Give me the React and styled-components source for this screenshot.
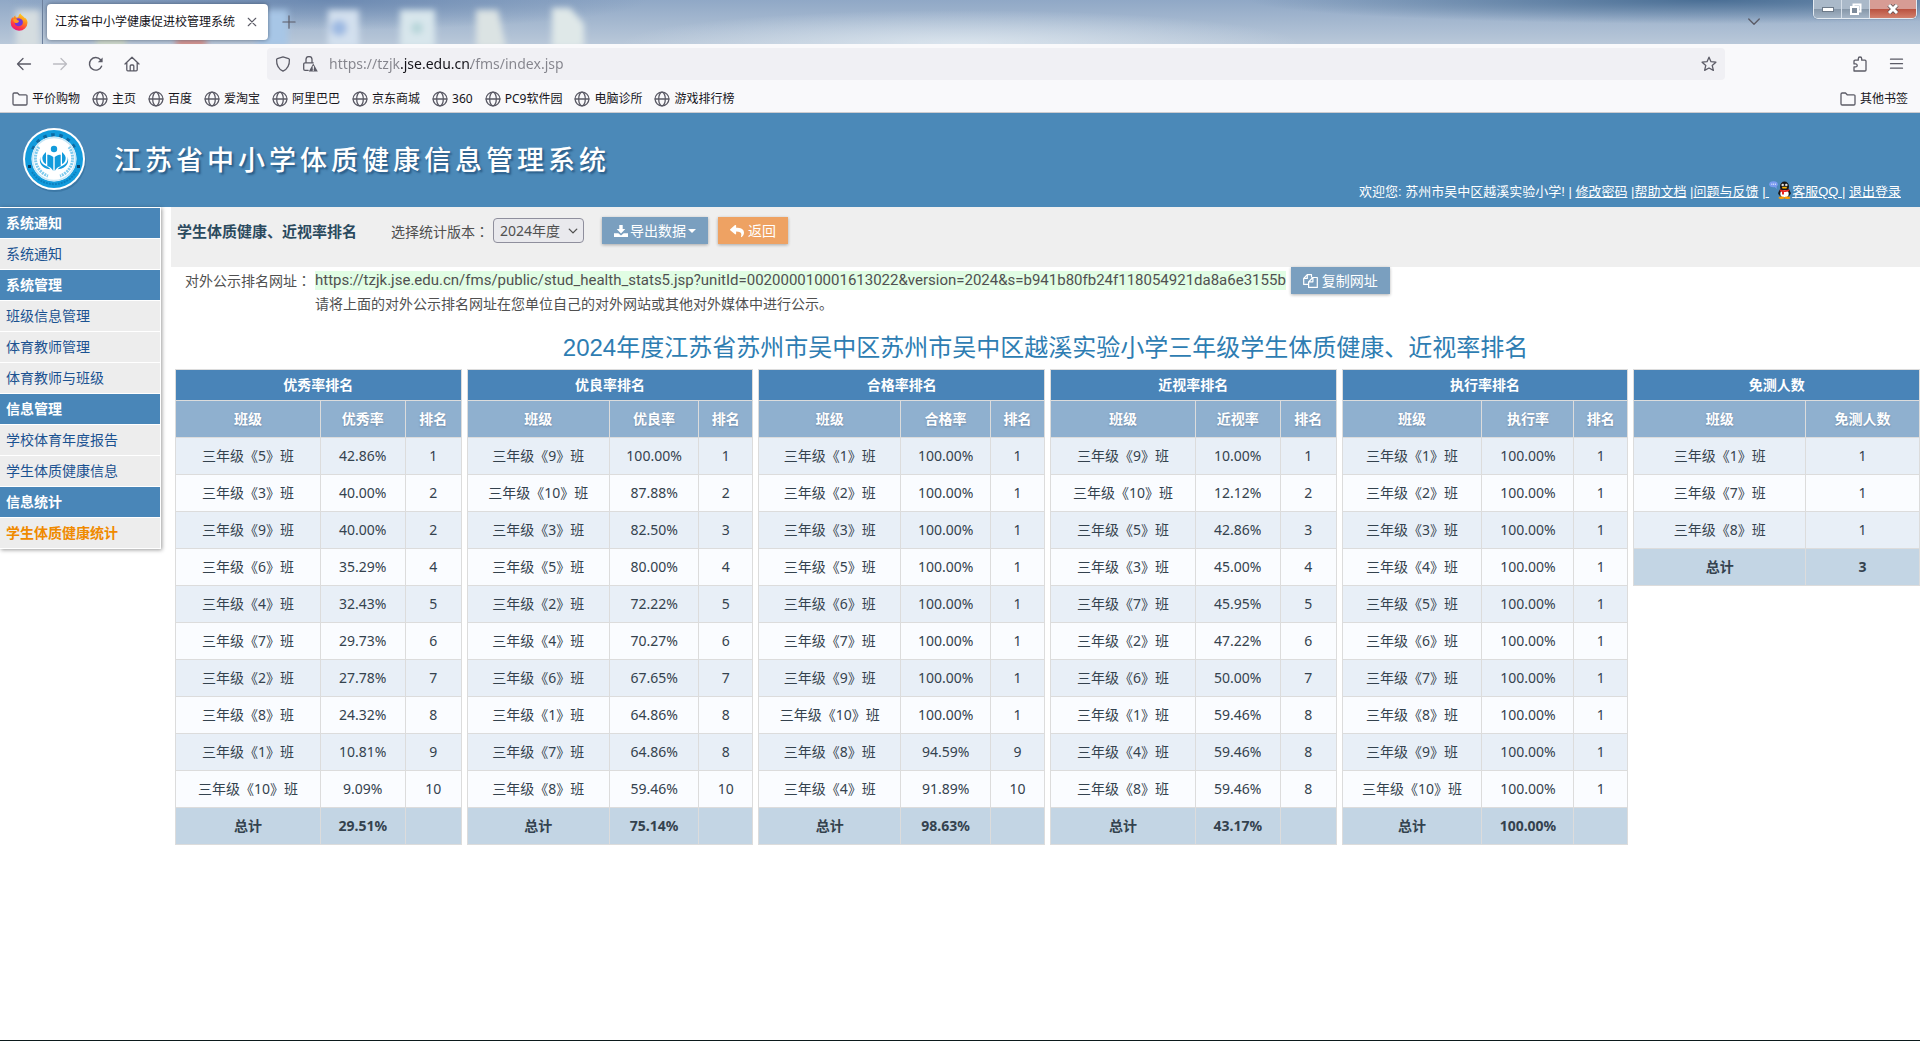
import React, { useState } from "react";
import styled, { createGlobalStyle, css } from "styled-components";
import { FaReply } from "react-icons/fa";

const BOOKMARKS = [
  { name: "平价购物", folder: true },
  { name: "主页" },
  { name: "百度" },
  { name: "爱淘宝" },
  { name: "阿里巴巴" },
  { name: "京东商城" },
  { name: "360" },
  { name: "PC9软件园" },
  { name: "电脑诊所" },
  { name: "游戏排行榜" },
];

const MENU = [
  { title: "系统通知", items: ["系统通知"] },
  { title: "系统管理", items: ["班级信息管理", "体育教师管理", "体育教师与班级"] },
  { title: "信息管理", items: ["学校体育年度报告", "学生体质健康信息"] },
  { title: "信息统计", items: ["学生体质健康统计"] },
];

const ACTIVE_ITEM = "学生体质健康统计";

const PUBLIC_URL =
  "https://tzjk.jse.edu.cn/fms/public/stud_health_stats5.jsp?unitId=002000010001613022&version=2024&s=b941b80fb24f118054921da8a6e3155b";

// rows: [class number, value, rank]
const RANKINGS = [
  {
    title: "优秀率排名",
    columns: ["班级", "优秀率", "排名"],
    widths: [145, 85, 56],
    rows: [
      [5, "42.86%", 1],
      [3, "40.00%", 2],
      [9, "40.00%", 2],
      [6, "35.29%", 4],
      [4, "32.43%", 5],
      [7, "29.73%", 6],
      [2, "27.78%", 7],
      [8, "24.32%", 8],
      [1, "10.81%", 9],
      [10, "9.09%", 10],
    ],
    total: ["29.51%", ""],
  },
  {
    title: "优良率排名",
    columns: ["班级", "优良率", "排名"],
    widths: [142, 89, 54],
    rows: [
      [9, "100.00%", 1],
      [10, "87.88%", 2],
      [3, "82.50%", 3],
      [5, "80.00%", 4],
      [2, "72.22%", 5],
      [4, "70.27%", 6],
      [6, "67.65%", 7],
      [1, "64.86%", 8],
      [7, "64.86%", 8],
      [8, "59.46%", 10],
    ],
    total: ["75.14%", ""],
  },
  {
    title: "合格率排名",
    columns: ["班级", "合格率", "排名"],
    widths: [142, 90, 54],
    rows: [
      [1, "100.00%", 1],
      [2, "100.00%", 1],
      [3, "100.00%", 1],
      [5, "100.00%", 1],
      [6, "100.00%", 1],
      [7, "100.00%", 1],
      [9, "100.00%", 1],
      [10, "100.00%", 1],
      [8, "94.59%", 9],
      [4, "91.89%", 10],
    ],
    total: ["98.63%", ""],
  },
  {
    title: "近视率排名",
    columns: ["班级", "近视率", "排名"],
    widths: [145, 85, 56],
    rows: [
      [9, "10.00%", 1],
      [10, "12.12%", 2],
      [5, "42.86%", 3],
      [3, "45.00%", 4],
      [7, "45.95%", 5],
      [2, "47.22%", 6],
      [6, "50.00%", 7],
      [1, "59.46%", 8],
      [4, "59.46%", 8],
      [8, "59.46%", 8],
    ],
    total: ["43.17%", ""],
  },
  {
    title: "执行率排名",
    columns: ["班级", "执行率", "排名"],
    widths: [140, 92, 54],
    rows: [1, 2, 3, 4, 5, 6, 7, 8, 9, 10].map((n) => [n, "100.00%", 1]),
    total: ["100.00%", ""],
  },
  {
    title: "免测人数",
    columns: ["班级", "免测人数"],
    widths: [172, 114],
    rows: [
      [1, "1"],
      [7, "1"],
      [8, "1"],
    ],
    total: ["3"],
  },
];

const Line = ({ size = 16, width = 1.3, children, ...rest }) => (
  <svg
    width={size}
    height={size}
    viewBox="0 0 16 16"
    fill="none"
    stroke="currentColor"
    strokeWidth={width}
    strokeLinecap="round"
    strokeLinejoin="round"
    aria-hidden="true"
    {...rest}
  >
    {children}
  </svg>
);

const BackIcon = () => (
  <Line>
    <path d="M1.5 8h13M7 2.5 1.5 8 7 13.5" />
  </Line>
);

const ForwardIcon = () => (
  <Line>
    <path d="M14.5 8h-13M9 2.5 14.5 8 9 13.5" />
  </Line>
);

const ReloadIcon = () => (
  <Line width={1.4}>
    <path d="M13.6 10.2A6.3 6.3 0 1 1 12.6 3.8" />
    <path d="M14.6 1.5v4.8H9.8z" fill="currentColor" stroke="none" />
  </Line>
);

const HomeIcon = () => (
  <Line>
    <path d="M1 8 8 1.2 15 8M2.8 6.6v7.2a1 1 0 0 0 1 1h8.4a1 1 0 0 0 1-1V6.6M6.2 14.6V10a1 1 0 0 1 1-1h1.6a1 1 0 0 1 1 1v4.6" />
  </Line>
);

const ShieldIcon = () => (
  <Line>
    <path d="M8 .9 13.6 2.6c.5.2.8.5.8 1 .2 5-1.6 9.3-6.4 11.6C3.2 12.9 1.4 8.6 1.6 3.6c0-.5.3-.8.8-1z" />
  </Line>
);

const LockIcon = () => (
  <Line>
    <path d="M4 6.800V3.600a3 3 0 0 1 6 0v3.200M6.200 14.300H3a1.300 1.300 0 0 1-1.300-1.300V8.100A1.300 1.300 0 0 1 3 6.800h8.200" />
    <path d="M11.300 7.500 15.800 15.600H6.800z" fill="currentColor" stroke="none" />
    <path d="M11.300 10.300v2.300M11.300 14v.2" stroke="#f0f0f4" width="1" />
  </Line>
);

const StarIcon = () => (
  <Line>
    <path d="m8 1.200 2 4.500 4.900.5-3.700 3.200 1.200 4.900L8 12l-4.400 2.300 1.200-4.900L1.100 6.200 6 5.700z" />
  </Line>
);

const PuzzleIcon = () => (
  <Line>
    <path d="M2 15V10.900h1.700a1.500 1.500 0 0 0 0-3H2V5.200A1 1 0 0 1 3 4.200h3.300V2.700a1.700 1.700 0 0 1 3.400 0v1.500H13a1 1 0 0 1 1 1V14a1 1 0 0 1-1 1z" />
  </Line>
);

const MenuIcon = () => (
  <Line>
    <path d="M2.500 3.200h12M2.500 7.700h12M2.500 12.200h12" />
  </Line>
);

const FolderIcon = () => (
  <Line>
    <path d="M1 12.800V3.200A1.200 1.200 0 0 1 2.200 2h3.300l1.700 1.800h6.600A1.200 1.200 0 0 1 15 5v7.800a1.200 1.200 0 0 1-1.200 1.200H2.200A1.200 1.200 0 0 1 1 12.800z" />
  </Line>
);

const GlobeIcon = () => (
  <Line>
    <circle cx="8" cy="8" r="6.900" />
    <ellipse cx="8" cy="8" rx="3.300" ry="6.900" />
    <path d="M1.100 8h13.800" />
  </Line>
);

const FirefoxIcon = () => (
  <svg width="18" height="18" viewBox="0 0 18 18" aria-hidden="true">
    <defs>
      <linearGradient id="fox" x1="0.8" y1="0" x2="0.3" y2="1">
        <stop offset="0" stopColor="#ffe226" />
        <stop offset="0.4" stopColor="#ff8a1c" />
        <stop offset="0.75" stopColor="#ff3647" />
        <stop offset="1" stopColor="#e31587" />
      </linearGradient>
    </defs>
    <path
      d="M10.500.5c.5 2 3 2.700 4.500 4.700.3.400.4.100.4-.4 1.700 2 2.100 3.600 2.100 5A8.400 8 0 0 1 9 17.700 8.300 8 0 0 1 .7 9.500c0-2.300.8-4 2-5.400 0 .6.100 1 .4 1.300.4-1.300 1.200-2.400 2.300-3-.1 1 .2 1.600.8 2 1.400-.1 2-.3 2.300-1 .2-1.100.8-2.200 2-2.900z"
      fill="url(#fox)"
    />
    <path
      d="M6.200 5.700c2-1.100 5.700-.4 6.500 2.400.8 3-1.300 5.200-3.900 5.200-2.300 0-4.200-1.700-4.200-3.800 1 .7 2.200.6 3.100.1.900-.6 1.400-.8 1.300-1.300C8.700 7.600 7 8 6.200 5.700z"
      fill="#6f36d9"
    />
    <path d="M3 6.500c1.700-1.300 3.200-.8 4 .3.500.8 2 .6 2 1.300 0 .8-1.300 1.800-2.500 2-1.500.2-3-1.200-3.500-3.600z" fill="#ff9a1f" />
  </svg>
);

const DownloadIcon = () => (
  <svg width="14" height="14" viewBox="0 0 14 14" fill="currentColor" aria-hidden="true">
    <path d="M5.300 1h3.400v4h2.600L7 9.600 2.700 5h2.600z" />
    <path d="M0 9.200h4.300L7 11.600l2.700-2.400H14V13H0z" />
  </svg>
);

const CopyIcon = () => (
  <svg width="15" height="14" viewBox="0 0 15 14" fill="none" stroke="currentColor" strokeWidth="1.200" strokeLinejoin="round" aria-hidden="true">
    <path d="M5.300 10.400H.7V4.300L4.200.7h4.300v2.700M4.300.9v3.500H.8" />
    <path d="M9.800 3.500h4.500v9.900H5.600V7.800zM9.900 3.700v4.100H5.800" />
  </svg>
);

const QqIcon = () => (
  <svg width="23" height="18" viewBox="0 0 23 18" aria-hidden="true">
    <ellipse cx="4.500" cy="3.200" rx="4.300" ry="3" fill="#7b9bf0" />
    <path d="M5 5.500 8 8 7.200 4.800z" fill="#7b9bf0" />
    <path d="M2.300 3.200h1M4.100 3.200h1M5.900 3.200h1" stroke="#fff" />
    <ellipse cx="15.500" cy="12" rx="5.800" ry="5" fill="#191919" />
    <path d="M9.200 13.500c0-3 1.500-4.500 2.500-5.500h7.600c1 1 2.500 2.500 2.500 5.500l-1.400-.5H10.600z" fill="#191919" />
    <ellipse cx="15.500" cy="5.500" rx="4.500" ry="5" fill="#191919" />
    <ellipse cx="15.500" cy="12.700" rx="4.200" ry="3.800" fill="#fff" />
    <circle cx="13.800" cy="4" r="1.300" fill="#fff" />
    <circle cx="17.200" cy="4" r="1.300" fill="#fff" />
    <circle cx="14.100" cy="4.100" r=".5" fill="#000" />
    <circle cx="16.900" cy="4.100" r=".5" fill="#000" />
    <ellipse cx="15.500" cy="6.700" rx="2.600" ry=".9" fill="#ffb400" />
    <path d="M10.800 8.200c3 1.500 6.400 1.500 9.400 0v1.900c-1.700.8-3.900 1.100-5.200 1v2.500h-2v-2.800c-1-.1-2.200-.6-2.200-.6z" fill="#e8231e" />
    <ellipse cx="12.600" cy="16.700" rx="3" ry="1.200" fill="#ff9d00" />
    <ellipse cx="18.400" cy="16.700" rx="3" ry="1.200" fill="#ff9d00" />
  </svg>
);

const SchoolBadge = () => (
  <svg width="66" height="66" viewBox="0 0 66 66" aria-hidden="true">
    <circle cx="33" cy="34" r="31" fill="#2d6794" opacity=".5" />
    <circle cx="32" cy="32" r="31" fill="#fff" />
    <circle cx="32" cy="32" r="29" fill="#129bdc" />
    <path d="M11 22.500A23.500 26 0 0 1 53 22.500" fill="none" stroke="#0b5d94" strokeWidth="4" strokeDasharray="3.500 4.500" opacity=".8" />
    <path d="M10 45A26 26 0 0 0 54 45" fill="none" stroke="#0a79b8" strokeWidth="2" strokeDasharray="2 1" opacity=".8" />
    <circle cx="32" cy="32" r="22.500" fill="#fff" />
    <circle cx="32" cy="32" r="21.500" fill="none" stroke="#c4e6f6" strokeWidth="1.500" />
    <path d="M17 20A19 19 0 0 0 26 49M47 20A19 19 0 0 1 38 49" fill="none" stroke="#7fcbee" strokeWidth="3" strokeDasharray="2 .8" />
    <circle cx="32" cy="22" r="3.200" fill="#129bdc" />
    <path d="M31.300 44V30c-2-1.700-4-2.300-6-2.300v11.500c2.500.5 4.500 2 6 4.800zM32.700 44V30c2-1.700 4-2.300 6-2.300v11.500c-2.500.5-4.500 2-6 4.800z" fill="#129bdc" />
    <path d="M24 25c-3 2.500-4.200 5-3.500 7.500.5 2.500 2 4 3.500 4.500zM40 25c3 2.500 4.200 5 3.500 7.500-.5 2.500-2 4-3.500 4.500z" fill="#129bdc" />
    <path d="M18.500 29.500c-.8 3.500.4 6 3 8 2 1.600 5 2.300 7 4.700-5.500 0-13-4-10-12.700zM45.500 29.500c.8 3.500-.4 6-3 8-2 1.600-5 2.300-7 4.700 5.500 0 13-4 10-12.700z" fill="#129bdc" />
    <rect x="6" y="38" width="3" height="3" fill="#0b3f66" />
    <rect x="55" y="38" width="3" height="3" fill="#0b3f66" />
  </svg>
);

// desktop icons showing through the translucent title bar
const DesktopGlow = () => (
  <GlowSvg width="620" height="44" aria-hidden="true">
    <defs>
      <filter id="soft" x="-50%" y="-50%" width="200%" height="200%">
        <feGaussianBlur stdDeviation="3" />
      </filter>
    </defs>
    <g filter="url(#soft)">
      <rect x="16" y="10" width="24" height="40" fill="#d5dde0" />
      <rect x="96" y="14" width="30" height="34" fill="#cfd9c9" />
      <rect x="176" y="38" width="30" height="10" fill="#d58d86" />
      <rect x="256" y="10" width="32" height="36" fill="#a7c6e6" />
      <rect x="328" y="10" width="31" height="38" fill="#d3e0ee" />
      <circle cx="339" cy="28" r="8" fill="#9db9e2" />
      <rect x="400" y="10" width="35" height="38" fill="#d8e6ec" />
      <circle cx="417" cy="28" r="6" fill="#b6d5d9" />
      <path d="M476 10h22l8 38h-30z" fill="#dbe3e3" />
      <path d="M552 8h18l14 16v24h-32z" fill="#dfe8e8" />
    </g>
  </GlowSvg>
);

const RankTable = ({ title, columns, widths, rows, total }) => {
  const sum = widths.reduce((a, b) => a + b, 0);
  return (
    <Table>
      <colgroup>
        {widths.map((w, i) => (
          <col key={i} style={{ width: `${(w / sum) * 100}%` }} />
        ))}
      </colgroup>
      <thead>
        <tr>
          <TableTitle colSpan={columns.length}>{title}</TableTitle>
        </tr>
        <tr>
          {columns.map((name) => (
            <ColumnHead key={name} scope="col">
              {name}
            </ColumnHead>
          ))}
        </tr>
      </thead>
      <tbody>
        {rows.map(([cls, ...values]) => (
          <Row key={cls}>
            <Cell>三年级《{cls}》班</Cell>
            {values.map((value, i) => (
              <Cell key={i}>{value}</Cell>
            ))}
          </Row>
        ))}
      </tbody>
      <tfoot>
        <tr>
          <TotalCell>总计</TotalCell>
          {total.map((value, i) => (
            <TotalCell key={i}>{value}</TotalCell>
          ))}
        </tr>
      </tfoot>
    </Table>
  );
};

const App = () => {
  const [version, setVersion] = useState("2024");
  const [address, setAddress] = useState("https://tzjk.jse.edu.cn/fms/index.jsp");

  return (
    <Page>
      <GlobalStyle />
      <TabBar>
        <DesktopGlow />
        <PinnedTab type="button" aria-label="Firefox">
          <FirefoxIcon />
        </PinnedTab>
        <Tab>
          <TabTitle>江苏省中小学健康促进校管理系统</TabTitle>
          <GhostButton type="button" aria-label="关闭标签页">
            <Line size={10} width={1.8}>
              <path d="M2 2l12 12M14 2 2 14" />
            </Line>
          </GhostButton>
        </Tab>
        <NewTab type="button" aria-label="新标签页">
          <Line size={14}>
            <path d="M8 1v14M1 8h14" />
          </Line>
        </NewTab>
        <TabList type="button" aria-label="列出所有标签页">
          <Line size={12} width={1.8}>
            <path d="M1 4l7 7 7-7" />
          </Line>
        </TabList>
        <WindowControls>
          <WindowButton type="button" aria-label="最小化">
            <svg width="12" height="5">
              <rect x=".5" y=".5" width="11" height="4" fill="#fff" stroke="#6d7a89" />
            </svg>
          </WindowButton>
          <WindowButton type="button" aria-label="还原">
            <svg width="13" height="13">
              <path d="M4.500 3V1.500h7v7H10" fill="none" stroke="#fff" strokeWidth="2" />
              <rect x="2" y="4" width="7" height="7" fill="#7d8b9b" stroke="#fff" strokeWidth="2" />
            </svg>
          </WindowButton>
          <WindowButton type="button" aria-label="关闭" $close>
            <svg width="12" height="10">
              <path d="M2 1l8 8M10 1 2 9" stroke="#5d5053" strokeWidth="4.500" />
              <path d="M2 1l8 8M10 1 2 9" stroke="#fff" strokeWidth="3" />
            </svg>
          </WindowButton>
        </WindowControls>
      </TabBar>

      <NavBar>
        <NavButtons>
          <GhostButton type="button" aria-label="后退">
            <BackIcon />
          </GhostButton>
          <GhostButton type="button" aria-label="前进" disabled>
            <ForwardIcon />
          </GhostButton>
          <GhostButton type="button" aria-label="刷新">
            <ReloadIcon />
          </GhostButton>
          <GhostButton type="button" aria-label="主页">
            <HomeIcon />
          </GhostButton>
        </NavButtons>
        <UrlBar>
          <ShieldIcon />
          <LockIcon />
          <UrlInput
            aria-label="地址"
            value={address}
            onChange={(e) => setAddress(e.target.value)}
          />
          <GhostButton type="button" aria-label="添加书签">
            <StarIcon />
          </GhostButton>
        </UrlBar>
        <NavTools>
          <GhostButton type="button" aria-label="扩展">
            <PuzzleIcon />
          </GhostButton>
          <GhostButton type="button" aria-label="菜单">
            <MenuIcon />
          </GhostButton>
        </NavTools>
      </NavBar>

      <BookmarkBar>
        {BOOKMARKS.map(({ name, folder }) => (
          <Bookmark key={name} href="#">
            {folder ? <FolderIcon /> : <GlobeIcon />}
            {name}
          </Bookmark>
        ))}
        <OtherBookmarks href="#">
          <FolderIcon />
          其他书签
        </OtherBookmarks>
      </BookmarkBar>

      <Header>
        <Brand>
          <SchoolBadge />
          <BrandTitle>江苏省中小学体质健康信息管理系统</BrandTitle>
        </Brand>
        <UserLinks>
          欢迎您: 苏州市吴中区越溪实验小学! | <HeaderLink href="#">修改密码</HeaderLink> |
          <HeaderLink href="#">帮助文档</HeaderLink> |
          <HeaderLink href="#">问题与反馈</HeaderLink> |
          <HeaderLink href="#">
            &nbsp;
            <QqIcon />
            客服QQ&nbsp;
          </HeaderLink>
          | <HeaderLink href="#">退出登录</HeaderLink>
        </UserLinks>
      </Header>

      <Body>
        <Sidebar>
          {MENU.map((group) => (
            <React.Fragment key={group.title}>
              <MenuTitle>{group.title}</MenuTitle>
              {group.items.map((item) => (
                <MenuItem key={item} href="#" $active={item === ACTIVE_ITEM}>
                  {item}
                </MenuItem>
              ))}
            </React.Fragment>
          ))}
        </Sidebar>

        <Main>
          <Toolbar>
            <PageTitle>学生体质健康、近视率排名</PageTitle>
            <VersionLabel htmlFor="version">
              选择统计版本<Colon>：</Colon>
            </VersionLabel>
            <SelectWrap>
              <Select id="version" value={version} onChange={(e) => setVersion(e.target.value)}>
                <option value="2024">2024年度</option>
                <option value="2023">2023年度</option>
                <option value="2022">2022年度</option>
              </Select>
              <Line size={10} width={2.2}>
                <path d="M2 5l6 6 6-6" />
              </Line>
            </SelectWrap>
            <ExportButton type="button">
              <DownloadIcon />
              <span>导出数据</span>
              <Caret />
            </ExportButton>
            <ActionButton type="button" $orange>
              <FaReply size={14} />
              返回
            </ActionButton>
          </Toolbar>

          <PublicInfo>
            <span>
              对外公示排名网址<Colon>：</Colon>
            </span>
            <UrlLine>
              <PublicLink href="#">{PUBLIC_URL}</PublicLink>
              <ActionButton type="button">
                <CopyIcon />
                复制网址
              </ActionButton>
            </UrlLine>
            <Hint>请将上面的对外公示排名网址在您单位自己的对外网站或其他对外媒体中进行公示。</Hint>
          </PublicInfo>

          <ReportTitle>
            2024年度江苏省苏州市吴中区苏州市吴中区越溪实验小学三年级学生体质健康、近视率排名
          </ReportTitle>

          <Tables>
            {RANKINGS.map((ranking) => (
              <RankTable key={ranking.title} {...ranking} />
            ))}
          </Tables>
        </Main>
      </Body>
      <BottomEdge />
    </Page>
  );
};

export default App;

const GlobalStyle = createGlobalStyle`
  * {
    box-sizing: border-box;
  }

  body {
    margin: 0;
    background: #fff;
    color: #505050;
    font-family: "Noto Sans", "Noto Sans CJK SC", sans-serif;
    font-size: 14px;
    line-height: 20px;
  }

  button, input, select {
    font: inherit;
  }

  svg {
    flex: none;
  }
`;

const Page = styled.div`
  display: flex;
  flex-direction: column;
  min-height: 100vh;
`;

const TabBar = styled.div`
  position: relative;
  display: flex;
  align-items: center;
  height: 44px;
  color: #4e5866;
  background:
    radial-gradient(ellipse 340px 34px at 50% 100%, rgba(226, 235, 242, 0.8), transparent),
    radial-gradient(ellipse 460px 24px at 89% 0, rgba(66, 104, 143, 0.9), transparent),
    radial-gradient(ellipse 320px 30px at 17% 0, rgba(92, 124, 168, 0.7), transparent),
    linear-gradient(to bottom, #90a8c6, #b9c8d9);
`;

const GlowSvg = styled.svg`
  position: absolute;
  left: 0;
  top: 0;
`;

const GhostButton = styled.button`
  display: flex;
  padding: 0;
  border: 0;
  background: none;
  color: #5b5b66;

  &:disabled {
    color: #bcbcc2;
  }
`;

const PinnedTab = styled(GhostButton)`
  position: relative;
  align-self: stretch;
  align-items: center;
  width: 43px;
  padding-left: 10px;
  border-right: 1px solid #6c7f9c;
`;

const Tab = styled.div`
  position: relative;
  display: flex;
  align-items: center;
  justify-content: space-between;
  width: 221px;
  height: 36px;
  margin-left: 4px;
  padding: 0 11px 0 8px;
  border-radius: 4px;
  background: #fff;
  box-shadow: 0 0 4px rgba(40, 50, 70, 0.6);
`;

const TabTitle = styled.span`
  font-size: 12px;
  color: #15141a;
`;

const NewTab = styled(GhostButton)`
  position: relative;
  margin-left: 14px;
`;

const TabList = styled(GhostButton)`
  margin: 0 53px 0 auto;
`;

const WindowControls = styled.div`
  display: flex;
  align-self: flex-start;
  height: 19px;
  margin-right: 3px;
  border: 1px solid #e4ebf2;
  border-top: 0;
  border-radius: 0 0 5px 5px;
  overflow: hidden;
  box-shadow: 0 0 1px #3d4d60;
`;

const WindowButton = styled.button`
  display: flex;
  align-items: center;
  justify-content: center;
  width: 28px;
  padding: 0;
  border: 0;
  border-right: 1px solid #d5dee8;
  background: linear-gradient(#aab9c9 50%, #8596a8 50%, #a5b5c6);

  ${({ $close }) =>
    $close &&
    css`
      width: 46px;
      border-right: 0;
      background: linear-gradient(#d79c94 50%, #b9513f 50%, #d3806c);
    `}
`;

const NavBar = styled.div`
  display: flex;
  align-items: center;
  height: 40px;
  padding: 0 16px;
  background: #f9f9fb;
`;

const NavButtons = styled.div`
  display: flex;
  gap: 20px;
  margin-right: 127px;
`;

const UrlBar = styled.div`
  display: flex;
  flex: 1;
  align-items: center;
  gap: 11px;
  height: 32px;
  padding: 0 8px;
  border-radius: 4px;
  background: #f0f0f4;
  color: #5b5b66;
`;

const UrlInput = styled.input`
  flex: 1;
  min-width: 0;
  padding: 0;
  border: 0;
  outline: 0;
  color: transparent;
  caret-color: #15141a;
  /* the host part is darker than the rest of the address */
  background: linear-gradient(to right, #84848c 71px, #15141a 71px, #15141a 142px, #84848c 142px);
  -webkit-background-clip: text;
  background-clip: text;
`;

const NavTools = styled.div`
  display: flex;
  gap: 20px;
  margin-left: 127px;
`;

const BookmarkBar = styled.nav`
  display: flex;
  align-items: center;
  gap: 12px;
  height: 29px;
  padding: 2px 12px 0;
  border-bottom: 1px solid #ccccd0;
  background: #f9f9fb;
`;

const Bookmark = styled.a`
  display: flex;
  align-items: center;
  gap: 4px;
  color: #15141a;
  font-size: 12px;
  text-decoration: none;

  svg {
    color: #5b5b66;
  }
`;

const OtherBookmarks = styled(Bookmark)`
  margin-left: auto;
`;

const Header = styled.header`
  display: flex;
  align-items: flex-end;
  justify-content: space-between;
  height: 94px;
  padding: 0 19px 0 22px;
  background: #4b89b8;
  color: #fff;
`;

const Brand = styled.div`
  display: flex;
  align-items: center;
  align-self: center;
  gap: 26px;
`;

const BrandTitle = styled.h1`
  margin: 0;
  font-size: 27px;
  font-weight: 500;
  line-height: 32px;
  letter-spacing: 4px;
  text-shadow: 2px 2px 2px rgba(20, 60, 100, 0.6);
`;

const UserLinks = styled.div`
  padding-bottom: 5px;
  font-family: "Liberation Sans", "Noto Sans CJK SC", sans-serif;
  font-size: 13px;
  white-space: nowrap;
`;

const HeaderLink = styled.a`
  color: #fff;
  text-decoration: underline;

  svg {
    vertical-align: -3px;
  }
`;

const Body = styled.div`
  display: flex;
  flex: 1;
  align-items: flex-start;
`;

const Sidebar = styled.nav`
  display: flex;
  flex-direction: column;
  flex: none;
  gap: 1px;
  width: 161px;
  padding: 1px 1px 1px 0;
  background: #fff;
  box-shadow: 1px 1px 4px rgba(0, 0, 0, 0.4);
`;

const MenuTitle = styled.h2`
  margin: 0;
  padding: 0 6px;
  background: #4986b8;
  color: #fff;
  font-size: 14px;
  font-weight: bold;
  line-height: 30px;
`;

const MenuItem = styled.a`
  padding: 0 6px;
  background: #ededed;
  color: ${({ $active }) => ($active ? "#f08a00" : "#1b5291")};
  font-weight: ${({ $active }) => ($active ? "bold" : "normal")};
  line-height: 30px;
  text-decoration: none;
`;

const Main = styled.main`
  flex: 1;
  min-width: 0;
  margin-left: 10px;
`;

const Toolbar = styled.div`
  display: flex;
  align-items: flex-start;
  height: 60px;
  padding: 10px 6px;
  background: #efefef;
  line-height: 28px;
`;

const PageTitle = styled.h2`
  margin: 0 34px 0 0;
  color: #2b4a5e;
  font-size: 15px;
  font-weight: bold;
  line-height: 28px;
`;

const VersionLabel = styled.label`
  margin-right: 4px;
`;

/* the TC face centres the full-width colon in its box */
const Colon = styled.span`
  font-family: "Noto Sans CJK TC", sans-serif;
`;

const SelectWrap = styled.div`
  position: relative;
  display: flex;
  margin: 1px 18px 0 0;

  svg {
    position: absolute;
    right: 6px;
    top: 8px;
    pointer-events: none;
  }
`;

const Select = styled.select`
  appearance: none;
  width: 91px;
  height: 25px;
  padding: 0 6px;
  border: 1px solid #8f8f9d;
  border-radius: 4px;
  background: #e9e9ed;
  color: #505050;
  line-height: 20px;
`;

const ActionButton = styled.button`
  display: inline-flex;
  align-items: center;
  gap: 4px;
  height: 27px;
  padding: 0 12px;
  border: 0;
  background: ${({ $orange }) => ($orange ? "#eea263" : "#7a9fbf")};
  box-shadow: 0 1px 3px rgba(0, 0, 0, 0.3);
  color: #fff;
  line-height: 20px;
  white-space: nowrap;
`;

const ExportButton = styled(ActionButton)`
  gap: 2px;
  margin-right: 10px;
`;

const Caret = styled.i`
  border: 4px solid transparent;
  border-top-color: #fff;
  border-bottom: 0;
`;

const PublicInfo = styled.div`
  display: grid;
  grid-template-columns: auto 1fr;
  column-gap: 4px;
  align-items: center;
  padding-left: 14px;
`;

const UrlLine = styled.div`
  display: flex;
  align-items: center;
  gap: 5px;
`;

const PublicLink = styled.a`
  background: #e1fde4;
  color: #505050;
  font-family: Roboto, "Noto Sans", sans-serif;
  font-size: 15px;
  line-height: 19px;
  text-decoration: none;
`;

const Hint = styled.p`
  grid-column: 2;
  margin: 0;
`;

const ReportTitle = styled.h3`
  margin: 18px 0 5px;
  color: #2e7db2;
  font-family: "Liberation Sans", "Noto Sans CJK SC", sans-serif;
  font-size: 24px;
  font-weight: normal;
  line-height: 32px;
  text-align: center;
`;

const Tables = styled.div`
  display: grid;
  grid-template-columns: repeat(6, 1fr);
  gap: 5px;
  align-items: start;
  padding-left: 4px;
`;

const Table = styled.table`
  width: 100%;
  border-collapse: collapse;
  table-layout: fixed;
  color: #34424e;
  text-align: center;
`;

const cell = css`
  height: 37px;
  padding: 0;
  border: 1px solid #dcdcdc;
`;

const TableTitle = styled.th`
  ${cell}
  height: 31px;
  background: #4984b8;
  color: #fff;
`;

const ColumnHead = styled.th`
  ${cell}
  background: #8fb0cf;
  color: #fff;
  text-shadow: 0 1px 2px rgba(60, 80, 110, 0.4);
`;

const Row = styled.tr`
  background: #fafcff;

  &:nth-child(odd) {
    background: #e8eff7;
  }
`;

const Cell = styled.td`
  ${cell}
`;

const TotalCell = styled.td`
  ${cell}
  background: #c3d5e4;
  font-weight: bold;
`;

const BottomEdge = styled.div`
  height: 1px;
  background: #0c1a1c;
`;
